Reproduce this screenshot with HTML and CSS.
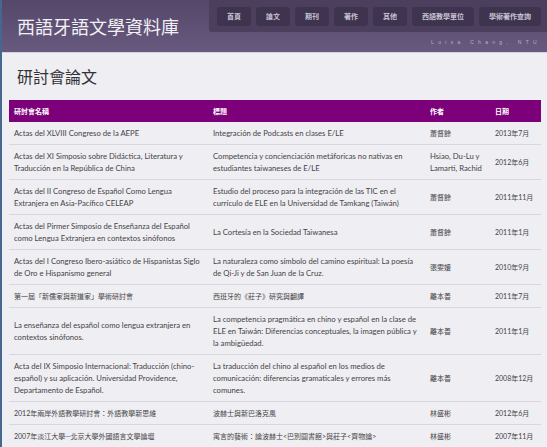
FILE: index.html
```html
<!DOCTYPE html>
<html lang="zh-Hant">
<head>
  <meta charset="UTF-8" />
  <title>研討會論文 - 西語牙語文學資料庫</title>
  <meta name="viewport" content="width=device-width, initial-scale=1.0"/>
  <link rel="stylesheet" href="styles.css">
</head>
<body>
  <!-- 頂部橫幅 -->
  <div class="header">
    <div class="site-title">西語牙語文學資料庫</div>
    <div class="header-right">
      <ul class="nav">
        <li>首頁</li>
        <li>論文</li>
        <li>期刊</li>
        <li>著作</li>
        <li>其他</li>
        <li>西語教學單位</li>
        <li>學術著作查詢</li>
      </ul>
      <div class="credit">Luisa Chang, NTU</div>
    </div>
  </div>

  <!-- 內容 -->
  <div class="content">
    <h1 class="page-title">研討會論文</h1>

    <table class="paper-table">
      <colgroup>
        <col class="col-conf">
        <col class="col-title">
        <col class="col-author">
        <col class="col-date">
      </colgroup>
      <thead>
        <tr>
          <th>研討會名稱</th>
          <th>標題</th>
          <th>作者</th>
          <th>日期</th>
        </tr>
      </thead>
      <tbody>
        <tr>
          <td>Actas del XLVIII Congreso de la AEPE</td>
          <td>Integración de Podcasts en clases E/LE</td>
          <td class="zh">蕭督餘</td>
          <td class="zh">2013年7月</td>
        </tr>
        <tr>
          <td>Actas del XI Simposio sobre Didáctica, Literatura y Traducción en la República de China</td>
          <td>Competencia y concienciación metáforicas no nativas en estudiantes taiwaneses de E/LE</td>
          <td>Hsiao, Du-Lu y Lamarti, Rachid</td>
          <td class="zh">2012年6月</td>
        </tr>
        <tr>
          <td>Actas del II Congreso de Español Como Lengua Extranjera en Asia-Pacífico CELEAP</td>
          <td>Estudio del proceso para la integración de las TIC en el currículo de ELE en la Universidad de Tamkang (Taiwán)</td>
          <td class="zh">蕭督餘</td>
          <td class="zh">2011年11月</td>
        </tr>
        <tr>
          <td>Actas del Pirmer Simposio de Enseñanza del Español como Lengua Extranjera en contextos sinófonos</td>
          <td>La Cortesía en la Sociedad Taiwanesa</td>
          <td class="zh">蕭督餘</td>
          <td class="zh">2011年1月</td>
        </tr>
        <tr>
          <td>Actas del I Congreso Ibero-asiático de Hispanistas Siglo de Oro e Hispanismo general</td>
          <td>La naturaleza como símbolo del camino espiritual: La poesía de Qi-Ji y de San Juan de la Cruz.</td>
          <td class="zh">張雯媛</td>
          <td class="zh">2010年9月</td>
        </tr>
        <tr>
          <td class="zh">第一屆「新儒家與新道家」學術研討會</td>
          <td class="zh">西班牙的《莊子》研究與翻譯</td>
          <td class="zh">離本善</td>
          <td class="zh">2011年7月</td>
        </tr>
        <tr>
          <td>La enseñanza del español como lengua extranjera en contextos sinófonos.</td>
          <td>La competencia pragmática en chino y español en la clase de ELE en Taiwán: Diferencias conceptuales, la imagen pública y la ambigüedad.</td>
          <td class="zh">離本善</td>
          <td class="zh">2011年1月</td>
        </tr>
        <tr>
          <td>Acta del IX Simposio Internacional: Traducción (chino-español) y su aplicación. Universidad Providence, Departamento de Español.</td>
          <td>La traducción del chino al español en los medios de comunicación: diferencias gramaticales y errores más comunes.</td>
          <td class="zh">離本善</td>
          <td class="zh">2008年12月</td>
        </tr>
        <tr>
          <td class="zh">2012年兩岸外語教學研討會：外語教學新思維</td>
          <td class="zh">波赫士與新巴洛克風</td>
          <td class="zh">林盛彬</td>
          <td class="zh">2012年6月</td>
        </tr>
        <tr>
          <td class="zh">2007年淡江大學─北京大學外國語言文學論壇</td>
          <td class="zh">寓言的藝術：論波赫士&lt;巴別圖書館&gt;與莊子&lt;齊物論&gt;</td>
          <td class="zh">林盛彬</td>
          <td class="zh">2007年11月</td>
        </tr>
      </tbody>
    </table>
  </div>
</body>
</html>
```

FILE: styles.css
```css
/*
 ================================
 通用頁面樣式
 ================================
*/
body {
  font-family: Lato, "Noto Sans CJK TC", sans-serif;
  background: #efeef3;
  margin: 0;
  padding: 0;
  border-left: 2px solid #46678f;
  min-height: 447px;
  box-sizing: border-box;
}

/*
 ================================
 頂部橫幅
 ================================
*/
.header {
  display: flex;
  justify-content: space-between;
  height: 52px;
  background: linear-gradient(#55476a, #685a7e);
  border-bottom: 1px solid #d6d2dc;
}
.site-title {
  padding: 14px 0 0 15px;
  font-family: "Noto Sans CJK TC", sans-serif;
  font-size: 18px;
  line-height: 24px;
  color: #f2f0f5;
}
.header-right {
  display: flex;
  flex-direction: column;
  align-items: stretch;
}
.nav {
  display: flex;
  gap: 5px;
  margin: 0;
  padding: 7px 6px 6px 8px;
  list-style: none;
  background: #4b3f5d;
  border-bottom-left-radius: 3px;
}
.nav li {
  height: 19px;
  line-height: 19px;
  padding: 0 10px;
  font-family: "Noto Sans CJK TC", sans-serif;
  font-size: 7px;
  font-weight: bold;
  color: #c9c3d2;
  background: #3f3450;
  border-radius: 3px;
}
.credit {
  margin-top: 7px;
  padding-right: 6px;
  text-align: right;
  font-family: "Liberation Sans", sans-serif;
  font-size: 5px;
  letter-spacing: 4.3px;
  color: #b8b0c6;
}

/*
 ================================
 內容
 ================================
*/
.content {
  padding: 0 6px 0 7px;
}
.page-title {
  margin: 13px 0 14px 8px;
  font-family: "Noto Sans CJK TC", sans-serif;
  font-size: 16px;
  line-height: 20px;
  font-weight: normal;
  color: #333;
}

.paper-table {
  width: 100%;
  border-collapse: collapse;
  table-layout: fixed;
}
.col-conf   { width: 199px; }
.col-title  { width: 217px; }
.col-author { width: 65px; }

.paper-table th {
  height: 22px;
  padding: 0 5px;
  text-align: left;
  font-family: "Noto Sans CJK TC", sans-serif;
  font-size: 7px;
  font-weight: bold;
  color: #fff;
  background: #7b0079;
}
.paper-table td {
  padding: 5px 3px 5px 5px;
  font-size: 7.7px;
  line-height: 12px;
  color: #444;
  vertical-align: middle;
  border-bottom: 1px solid #d9d7de;
}
.paper-table td.zh {
  font-size: 7px;
}
```
